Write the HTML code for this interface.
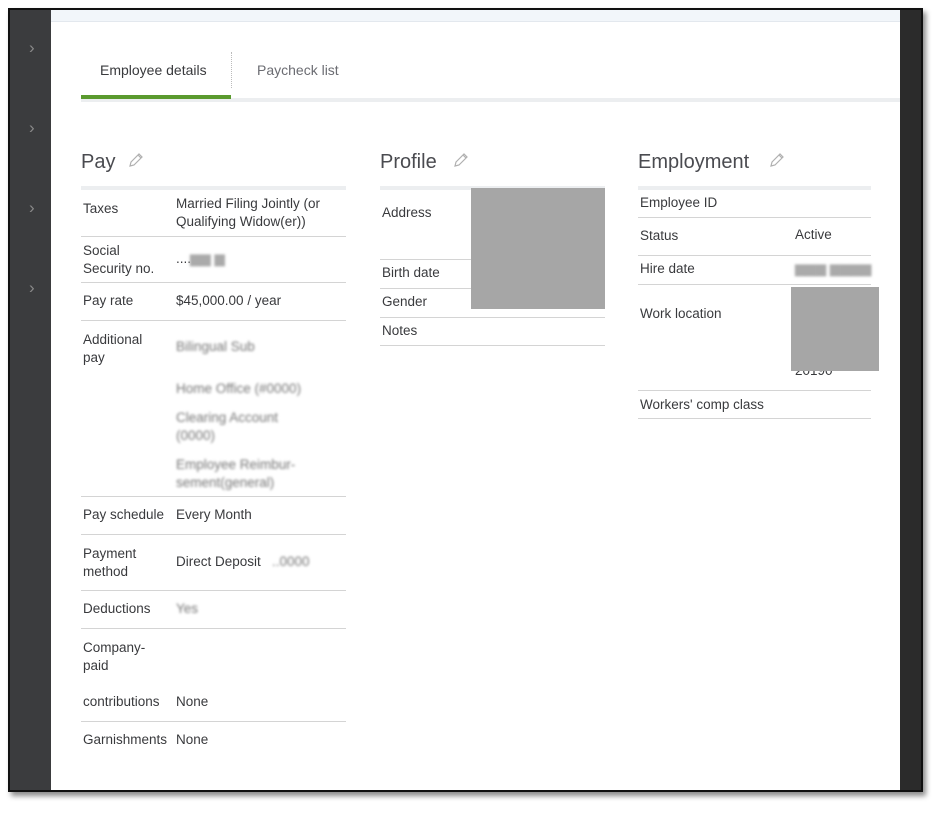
<!DOCTYPE html>
<html><head><style>
*{margin:0;padding:0;box-sizing:border-box}
body{width:946px;height:815px;background:#fff;position:relative;overflow:hidden;font-family:"Liberation Sans",sans-serif;color:#393a3d;font-size:13.5px}
.frame{position:absolute;left:8px;top:8px;width:915px;height:784px;border:2px solid #111;background:#fff;box-shadow:3px 4px 5px rgba(0,0,0,.45)}
.side{position:absolute;left:0;top:0;width:41px;height:100%;background:#3b3c3e}
.side span{position:absolute;left:19px;color:#8a8a8a;font-size:17px}
.rbar{position:absolute;right:0;top:0;width:21px;height:100%;background:#2b2b2b}
.top{position:absolute;left:41px;top:0;right:21px;height:12px;background:#f2f6fa;border-bottom:1px solid #e3e8ee}
.a{position:absolute;white-space:nowrap}
.line{position:absolute;height:1px;background:#d4d4d4}
.thick{position:absolute;height:4px;background:#eceef0}
h2{position:absolute;font-weight:normal;font-size:20px;color:#4a4b50}
.blur{position:absolute;color:#777;filter:blur(1.4px)}
.gray{position:absolute;background:#a6a6a6}
.pen{position:absolute;width:17px;height:17px}
</style></head><body>
<div class="frame">
<div class="side"><span style="top:28px">›</span><span style="top:108px">›</span><span style="top:188px">›</span><span style="top:268px">›</span></div>
<div class="rbar"></div>
<div class="top"></div>
</div>
<div class="a" style="left:100px;top:62px;font-size:14px;color:#393a3d">Employee details</div>
<div class="a" style="left:231px;top:52px;width:1px;height:36px;border-left:1px dotted #bbb"></div>
<div class="a" style="left:257px;top:62px;font-size:14px;color:#6b6c72">Paycheck list</div>
<div class="a" style="left:81px;top:98px;width:819px;height:4px;background:#eceef0"></div>
<div class="a" style="left:81px;top:95px;width:150px;height:4px;background:#5a9a2e"></div>

<svg width="0" height="0" style="position:absolute"><defs><g id="p"><path d="M3 14 L4 10 L12 2 L15 5 L7 13 Z M11 3 L14 6" fill="none" stroke="#b0b0b0" stroke-width="1.2"/></g></defs></svg>
<h2 style="left:81px;top:151px">Pay</h2><svg class="pen" style="left:127px;top:152px"><use href="#p"/></svg>
<h2 style="left:380px;top:151px">Profile</h2><svg class="pen" style="left:452px;top:152px"><use href="#p"/></svg>
<h2 style="left:638px;top:151px">Employment</h2><svg class="pen" style="left:768px;top:152px"><use href="#p"/></svg>

<div class="thick" style="left:81px;top:186px;width:265px"></div>
<div class="a" style="left:83px;top:201px">Taxes</div>
<div class="a" style="left:176px;top:195px;line-height:18px">Married Filing Jointly (or<br>Qualifying Widow(er))</div>
<div class="line" style="left:81px;top:236px;width:265px"></div>
<div class="a" style="left:83px;top:242px;line-height:18px">Social<br>Security no.</div>
<div class="a" style="left:176px;top:251px">....</div><div class="blur" style="left:190px;top:251px;color:#aaa">▆▆ ▆</div>
<div class="line" style="left:81px;top:282px;width:265px"></div>
<div class="a" style="left:83px;top:293px">Pay rate</div><div class="a" style="left:176px;top:293px">$45,000.00 / year</div>
<div class="line" style="left:81px;top:320px;width:265px"></div>
<div class="a" style="left:83px;top:331px;line-height:18px">Additional<br>pay</div>
<div class="blur" style="left:176px;top:339px">Bilingual Sub</div>
<div class="blur" style="left:176px;top:381px">Home Office (#0000)</div>
<div class="blur" style="left:176px;top:409px;line-height:18px">Clearing Account<br>(0000)</div>
<div class="blur" style="left:176px;top:456px;line-height:18px">Employee Reimbur-<br>sement(general)</div>
<div class="line" style="left:81px;top:496px;width:265px"></div>
<div class="a" style="left:83px;top:507px">Pay schedule</div><div class="a" style="left:176px;top:507px">Every Month</div>
<div class="line" style="left:81px;top:534px;width:265px"></div>
<div class="a" style="left:83px;top:545px;line-height:18px">Payment<br>method</div>
<div class="a" style="left:176px;top:554px">Direct Deposit</div><div class="blur" style="left:272px;top:554px">..0000</div>
<div class="line" style="left:81px;top:590px;width:265px"></div>
<div class="a" style="left:83px;top:601px">Deductions</div><div class="blur" style="left:176px;top:601px">Yes</div>
<div class="line" style="left:81px;top:628px;width:265px"></div>
<div class="a" style="left:83px;top:639px;line-height:18px">Company-<br>paid</div>
<div class="a" style="left:83px;top:694px">contributions</div><div class="a" style="left:176px;top:694px">None</div>
<div class="line" style="left:81px;top:721px;width:265px"></div>
<div class="a" style="left:83px;top:732px">Garnishments</div><div class="a" style="left:176px;top:732px">None</div>

<div class="thick" style="left:380px;top:186px;width:225px"></div>
<div class="a" style="left:382px;top:205px">Address</div>
<div class="line" style="left:380px;top:259px;width:225px"></div>
<div class="a" style="left:382px;top:265px">Birth date</div>
<div class="line" style="left:380px;top:288px;width:225px"></div>
<div class="a" style="left:382px;top:294px">Gender</div>
<div class="line" style="left:380px;top:317px;width:225px"></div>
<div class="a" style="left:382px;top:323px">Notes</div>
<div class="line" style="left:380px;top:345px;width:225px"></div>
<div class="gray" style="left:471px;top:188px;width:134px;height:121px"></div>

<div class="thick" style="left:638px;top:186px;width:233px"></div>
<div class="a" style="left:640px;top:195px">Employee ID</div>
<div class="line" style="left:638px;top:217px;width:233px"></div>
<div class="a" style="left:640px;top:228px">Status</div><div class="a" style="left:795px;top:227px">Active</div>
<div class="line" style="left:638px;top:255px;width:233px"></div>
<div class="a" style="left:640px;top:261px">Hire date</div><div class="blur" style="left:795px;top:261px;color:#aaa">▆▆▆ ▆▆▆▆</div>
<div class="line" style="left:638px;top:284px;width:233px"></div>
<div class="a" style="left:640px;top:306px">Work location</div>
<div class="a" style="left:795px;top:363px">20190</div>
<div class="gray" style="left:791px;top:287px;width:88px;height:84px"></div>
<div class="line" style="left:638px;top:390px;width:233px"></div>
<div class="a" style="left:640px;top:397px">Workers' comp class</div>
<div class="line" style="left:638px;top:418px;width:233px"></div>
</body></html>
